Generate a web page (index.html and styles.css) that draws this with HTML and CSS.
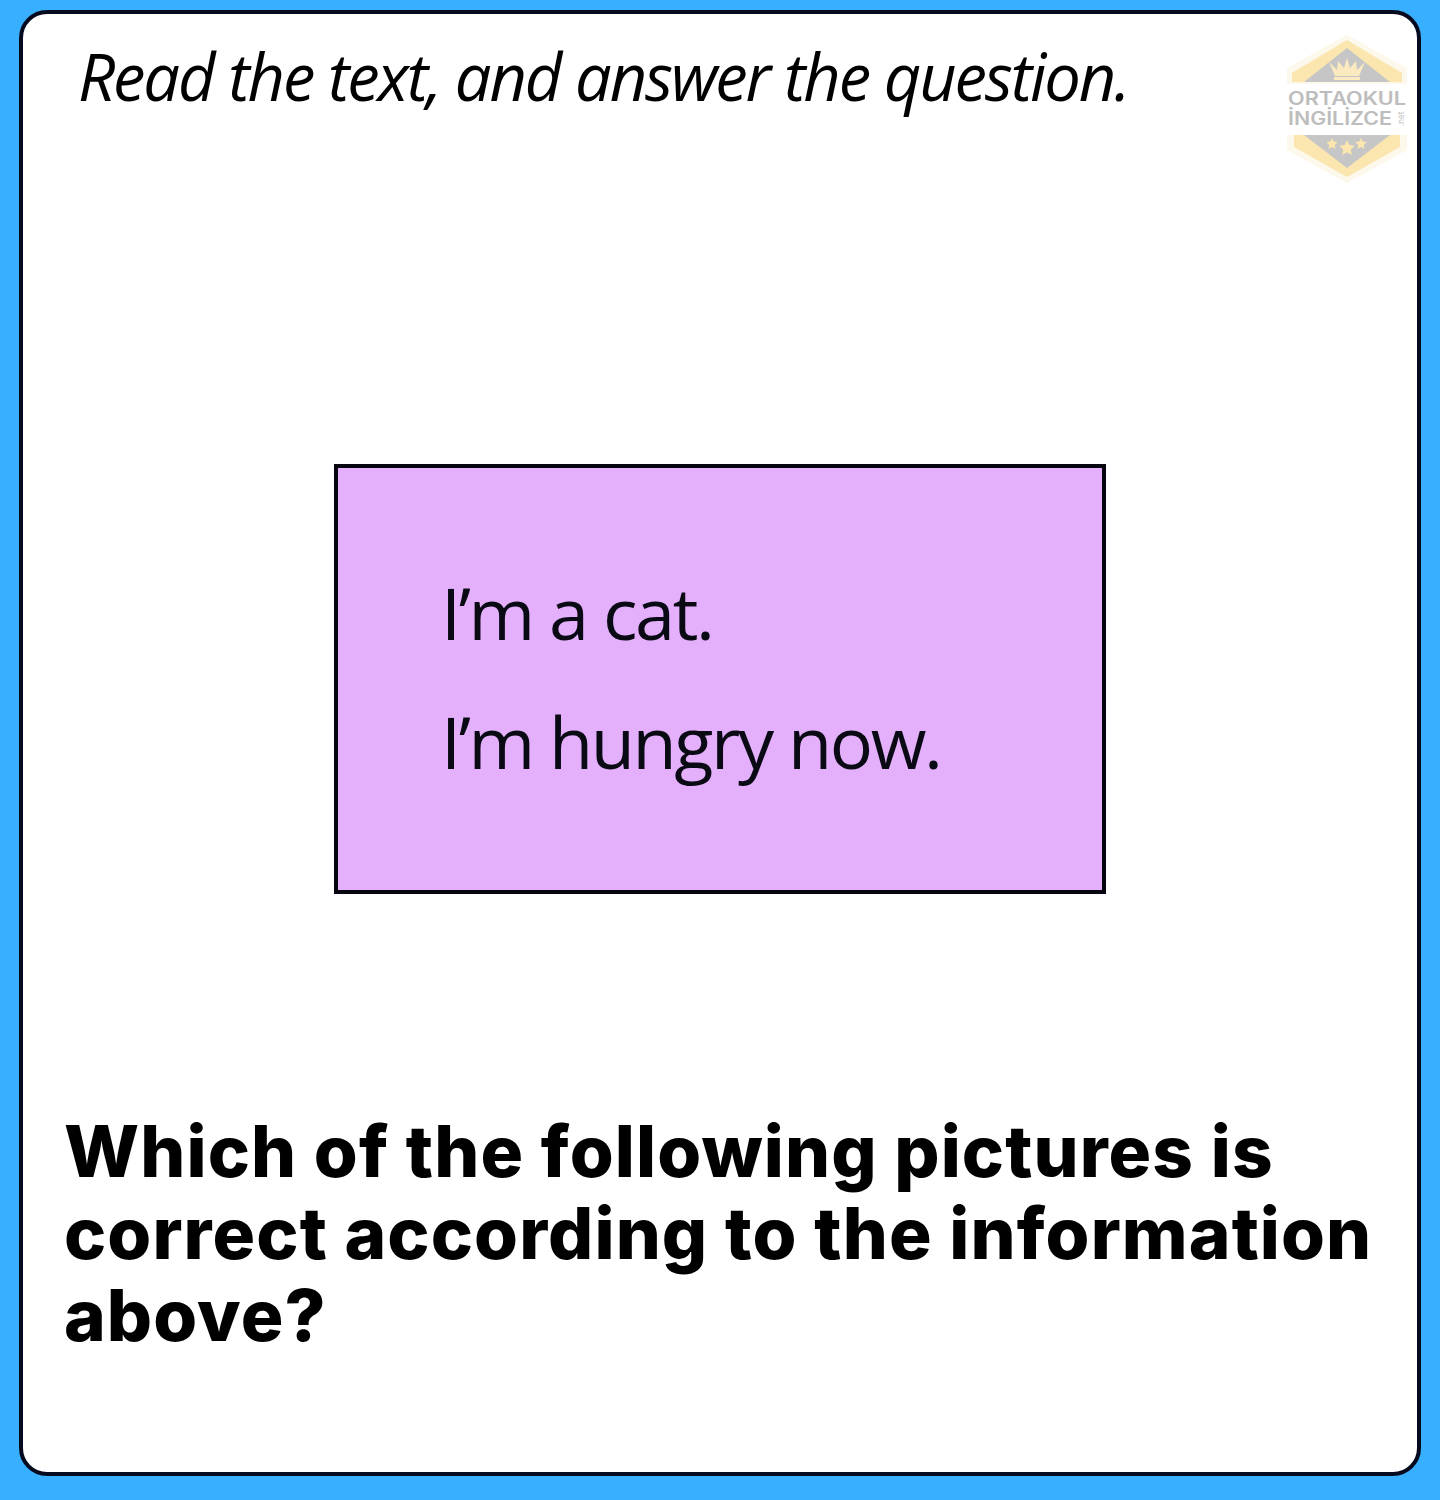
FILE: index.html
```html
<!DOCTYPE html>
<html lang="en">
<head>
<meta charset="utf-8">
<title>Read the text</title>
<link rel="stylesheet" href="styles.css">
</head>
<body>
<main class="card">
  <h1 class="instruction">Read the text, and answer the question.</h1>
  <svg class="logo" viewBox="0 0 120 148" width="120" height="148" aria-label="Ortaokul Ingilizce">
    <path class="l-cream" d="M60 0 L120 33 V115 L60 148 L0 115 V33 Z"/>
    <path class="l-yellow" d="M60 5 L115 38 V47 H5 V38 Z"/>
    <path class="l-grey" d="M60 13 L103 47 H17 Z"/>
    <path class="l-crown" d="M42 27 L50 35 L51 26 L57 33 L60 23 L63 33 L69 26 L70 35 L78 27 L72 41 H48 Z"/>
    <rect class="l-crown" x="47" y="42" width="26" height="3"/>
    <rect class="l-white" x="0" y="49" width="120" height="51"/>
    <text class="l-text" x="1" y="70" textLength="118" lengthAdjust="spacingAndGlyphs">ORTAOKUL</text>
    <text class="l-text" x="1" y="90" textLength="104" lengthAdjust="spacingAndGlyphs">İNGİLİZCE</text>
    <text class="l-net" transform="translate(117,91) rotate(-90)">.net</text>
    <path class="l-yellow" d="M7 100 H113 V112 L60 142 L7 112 Z"/>
    <path class="l-grey" d="M17 100 H103 L60 133 Z"/>
    <path class="l-star" d="M45 103 l1.700 3.600 4 .5 -2.900 2.800 .7 4 -3.500 -1.900 -3.500 1.900 .7 -4 -2.900 -2.800 4 -.5Z"/>
    <path class="l-star" d="M60 105 l2.400 5 5.400 .7 -4 3.800 1 5.400 -4.800 -2.600 -4.800 2.600 1 -5.400 -4 -3.800 5.400 -.7Z"/>
    <path class="l-star" d="M74 103 l1.700 3.600 4 .5 -2.900 2.800 .7 4 -3.500 -1.900 -3.500 1.900 .7 -4 -2.900 -2.800 4 -.5Z"/>
  </svg>
  <section class="text-box">
    <p class="text-line">I’m a cat.</p>
    <p class="text-line">I’m hungry now.</p>
  </section>
  <h2 class="question">Which of the following pictures is correct according to the information above?</h2>
</main>
</body>
</html>
```
FILE: styles.css
```css
* { box-sizing: border-box; }
html, body { margin: 0; height: 1500px; }
body {
  background: #38b0ff;
  padding: 10px 19px 24px 19px;
}
.card {
  position: relative;
  height: 1466px;
  background: #fff;
  border: 4px solid #050a1e;
  border-radius: 28px;
  display: flex;
  flex-direction: column;
}
.instruction {
  margin: 22px 0 0 55px;
  font: italic 400 65px/80px "Open Sans", sans-serif;
  letter-spacing: -2.1px;
  color: #000;
}
.logo {
  position: absolute;
  top: 21px;
  right: 10px;
}
.l-cream { fill: #fdf8ec; }
.l-yellow { fill: #fbe6b0; }
.l-grey { fill: #c6c6c6; }
.l-crown { fill: #fbe9c0; }
.l-white { fill: #fff; }
.l-star { fill: #fbe6b0; }
.l-text { font: 600 18px "Inter", sans-serif; fill: #bdbdbd; }
.l-net { font: 400 8px "Inter", sans-serif; fill: #bdbdbd; }
.text-box {
  align-self: center;
  margin-top: 348px;
  width: 772px;
  height: 430px;
  background: #e4b0fb;
  border: 4px solid #050510;
  padding: 104px 0 0 103px;
}
.text-line {
  margin: 0 0 49px;
  font: 400 72px/80px "Open Sans", sans-serif;
  letter-spacing: -2.4px;
  color: #0a0a14;
}
.question {
  margin: 216px 10px 0 41px;
  font: 800 71px/82px "Inter", sans-serif;
  letter-spacing: 1.1px;
  color: #000;
}
```
